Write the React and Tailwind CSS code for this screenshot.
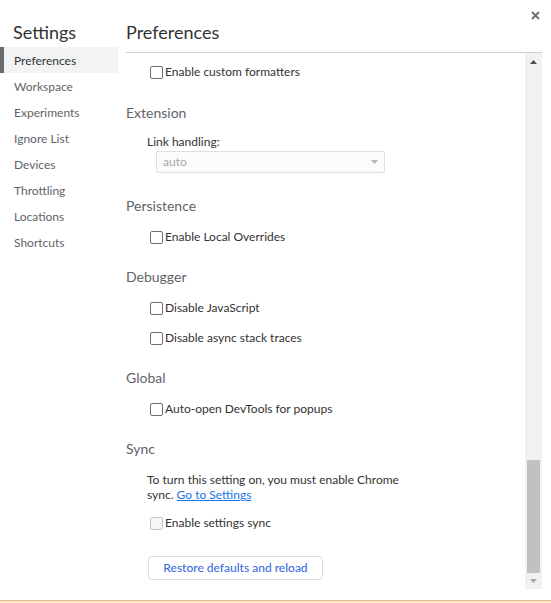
import React from 'react'

const NAV = ['Preferences', 'Workspace', 'Experiments', 'Ignore List', 'Devices', 'Throttling', 'Locations', 'Shortcuts']

function Box({ disabled }) {
  return (
    <span className={`inline-block w-[13px] h-[13px] rounded-[2px] border shrink-0 ${disabled ? 'border-[#c6c6c6] bg-[#f6f6f6]' : 'border-[#6e6e6e] bg-white'}`} />
  )
}

function Check({ label, disabled, className = '' }) {
  return (
    <label className={`flex items-center h-[28px] pl-[24px] ${className}`}>
      <Box disabled={disabled} />
      <span className="ml-[2px] text-[12px] text-[#333]">{label}</span>
    </label>
  )
}

function Section({ title, className = '' }) {
  return <div className={`h-[22px] leading-[22px] text-[14px] text-[#5f6368] ${className}`}>{title}</div>
}

export default function App() {
  return (
    <div className="w-[551px] h-[603px] bg-white flex flex-col overflow-hidden" style={{ fontFamily: 'Lato, "Open Sans", sans-serif' }}>
      <div className="flex flex-1 relative">
        <button className="absolute right-[11px] top-[11px] w-[9px] h-[9px] text-[#6e6e6e]">
          <svg viewBox="0 0 9 9" width="9" height="9">
            <path d="M1 1 L8 8 M8 1 L1 8" stroke="currentColor" strokeWidth="1.8" />
          </svg>
        </button>

        <aside className="w-[118px] shrink-0">
          <div className="h-[47px] pl-[13px] pt-[21px] text-[18px] leading-[22px] text-[#333]">Settings</div>
          {NAV.map((n, i) => (
            <div key={n} className={`h-[26px] leading-[27px] text-[12px] ${i === 0 ? 'bg-[#f1f3f4] text-[#333] border-l-[4px] border-[#6b6b6b] pl-[10px]' : 'text-[#5f6368] pl-[14px]'}`}>
              {n}
            </div>
          ))}
        </aside>

        <main className="flex-1 ml-[8px] mr-[9px] flex flex-col">
          <div className="h-[53px] border-b border-[#cfcfcf] pt-[21px] text-[18px] leading-[22px] text-[#333]">Preferences</div>
          <div className="flex h-[536px]">
            <div className="flex-1">
              <Check label="Enable custom formatters" className="mt-[5px]" />

              <Section title="Extension" className="mt-[16px]" />
              <div className="mt-[10px] pl-[21px] h-[16px] leading-[16px] text-[12px] text-[#333]">Link handling:</div>
              <div className="mt-[1px] ml-[30px] w-[229px] h-[22px] border border-[#e0e0e0] rounded-[2px] bg-[#fbfbfb] flex items-center justify-between pl-[6px] pr-[6px]">
                <span className="text-[12px] text-[#a8a8a8]">auto</span>
                <svg width="7" height="4" viewBox="0 0 7 4"><path d="M0 0 L7 0 L3.5 4 Z" fill="#b5b5b5" /></svg>
              </div>

              <Section title="Persistence" className="mt-[22px]" />
              <Check label="Enable Local Overrides" className="mt-[6px]" />

              <Section title="Debugger" className="mt-[15px]" />
              <Check label="Disable JavaScript" className="mt-[6px]" />
              <Check label="Disable async stack traces" className="mt-[2px]" />

              <Section title="Global" className="mt-[15px]" />
              <Check label="Auto-open DevTools for popups" className="mt-[6px]" />

              <Section title="Sync" className="mt-[15px]" />
              <p className="mt-[12px] pl-[21px] text-[12px] leading-[15px] text-[#333]">
                To turn this setting on, you must enable Chrome<br />
                sync. <a href="#" className="text-[#1a73e8] underline">Go to Settings</a>
              </p>
              <Check label="Enable settings sync" disabled className="mt-[7px]" />

              <button className="mt-[19px] ml-[22px] w-[175px] h-[24px] border border-[#dadce0] rounded-[4px] bg-white text-[12px] font-medium text-[#3c6ee0]">
                Restore defaults and reload
              </button>
            </div>

            <div className="w-[17px] bg-[#f1f1f1] flex flex-col">
              <div className="h-[17px] flex items-center justify-center">
                <svg width="7" height="4" viewBox="0 0 7 4"><path d="M0 4 L7 4 L3.5 0 Z" fill="#505050" /></svg>
              </div>
              <div className="flex-1" />
              <div className="h-[113px] mx-[2px] bg-[#c1c1c1]" />
              <div className="h-[16px] flex items-center justify-center">
                <svg width="7" height="4" viewBox="0 0 7 4"><path d="M0 0 L7 0 L3.5 4 Z" fill="#a3a3a3" /></svg>
              </div>
            </div>
          </div>
        </main>
      </div>
      <div className="h-[3px] border-t border-[#dcb98a] bg-[#fde8c8]" />
    </div>
  )
}
